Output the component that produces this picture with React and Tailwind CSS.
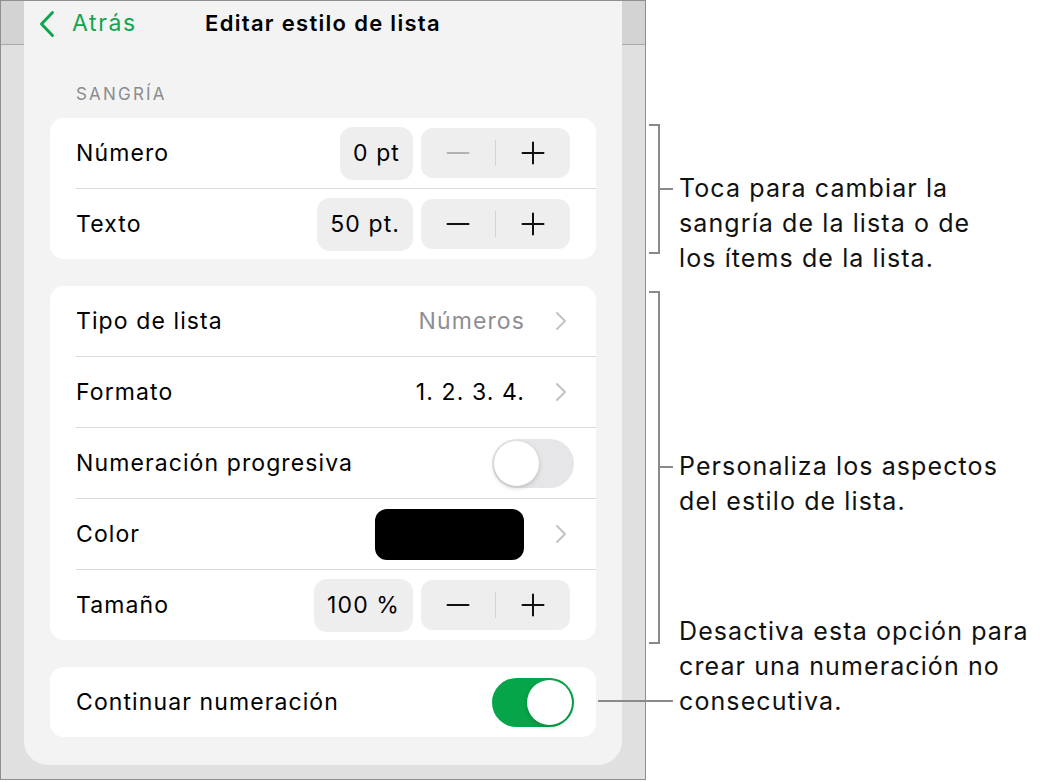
import React from "react";

const FONT = { fontFamily: "Inter, 'Noto Sans', sans-serif" };

function Chevron() {
  return (
    <svg width="13" height="20" viewBox="0 0 13 20" fill="none">
      <path d="M3 2l8 8-8 8" stroke="#c3c3c6" strokeWidth="2" strokeLinecap="round" strokeLinejoin="round" />
    </svg>
  );
}

function BackChevron() {
  return (
    <svg width="18" height="28" viewBox="0 0 18 28" fill="none">
      <path d="M14.5 2.5L3.5 14l11 11.5" stroke="#10a550" strokeWidth="3" strokeLinecap="round" strokeLinejoin="round" />
    </svg>
  );
}

function Stepper({ value, minusDisabled }) {
  return (
    <div className="flex items-center gap-[8px]">
      <div className="h-[53px] px-[13px] rounded-[13px] bg-[#eeeeef] flex items-center text-[23px] tracking-[1.1px] text-black">
        {value}
      </div>
      <div className="h-[50px] w-[149px] rounded-[12px] bg-[#eeeeef] flex items-center">
        <div className="flex-1 flex items-center justify-center">
          <svg width="24" height="24" viewBox="0 0 24 24">
            <path d="M1.5 12h21" stroke={minusDisabled ? "#b3b3b5" : "#111"} strokeWidth="2" strokeLinecap="round" />
          </svg>
        </div>
        <div className="w-[1px] h-[26px] bg-[#d4d4d6]" />
        <div className="flex-1 flex items-center justify-center">
          <svg width="24" height="24" viewBox="0 0 24 24">
            <path d="M1.5 12h21M12 1.5v21" stroke="#111" strokeWidth="2" strokeLinecap="round" />
          </svg>
        </div>
      </div>
    </div>
  );
}

function Toggle({ on }) {
  return (
    <div
      className={
        "w-[82px] h-[49px] rounded-full p-[2px] flex items-center " +
        (on ? "bg-[#07a54a] justify-end" : "bg-[#e6e6e9] justify-start")
      }
    >
      <div className="w-[45px] h-[45px] rounded-full bg-white shadow-[0_2px_5px_rgba(0,0,0,0.18)]" />
    </div>
  );
}

function Row({ label, children, right = "pr-[26px]" }) {
  return (
    <div className="h-[70px] pl-[26px] flex items-center">
      <div className={"flex-1 h-full flex items-center justify-between " + right}>
        <span className="text-[23px] tracking-[1.1px] text-black">{label}</span>
        <div className="flex items-center">{children}</div>
      </div>
    </div>
  );
}

function Sep() {
  return <div className="ml-[26px] h-[1px] bg-[#dadadc]" />;
}

function Card({ children }) {
  return <div className="bg-white rounded-[14px] overflow-hidden">{children}</div>;
}

function Panel() {
  return (
    <div className="w-[598px] h-[764px] bg-[#f3f3f3] rounded-b-[24px] flex flex-col">
      {/* navigation bar */}
      <div className="relative h-[45px] flex items-center">
        <div className="flex items-center pl-[14px] gap-[16px] text-[#10a550] text-[23px] tracking-[1.6px]">
          <BackChevron />
          <span>Atrás</span>
        </div>
        <div className="absolute inset-0 flex items-center justify-center pointer-events-none">
          <span className="text-[22px] font-semibold tracking-[1.3px] text-black">Editar estilo de lista</span>
        </div>
      </div>

      <div className="px-[26px] flex flex-col">
        <div className="mt-[37px] h-[22px] pl-[26px] text-[17px] leading-[22px] text-[#8b8b8f] tracking-[2.2px]">
          SANGRÍA
        </div>
        <div className="mt-[13px]">
          <Card>
            <Row label="Número">
              <Stepper value="0 pt" minusDisabled />
            </Row>
            <Sep />
            <Row label="Texto">
              <Stepper value="50 pt." />
            </Row>
          </Card>
        </div>

        <div className="mt-[27px]">
          <Card>
            <Row label="Tipo de lista" right="pr-[29px]">
              <span className="text-[23px] tracking-[1.1px] text-[#8e8e93] mr-[29px]">Números</span>
              <Chevron />
            </Row>
            <Sep />
            <Row label="Formato" right="pr-[29px]">
              <span className="text-[23px] tracking-[1.1px] text-black mr-[29px]">1. 2. 3. 4.</span>
              <Chevron />
            </Row>
            <Sep />
            <Row label="Numeración progresiva" right="pr-[22px]">
              <Toggle on={false} />
            </Row>
            <Sep />
            <Row label="Color" right="pr-[29px]">
              <div className="w-[149px] h-[51px] rounded-[12px] bg-black mr-[30px]" />
              <Chevron />
            </Row>
            <Sep />
            <Row label="Tamaño">
              <Stepper value="100 %" />
            </Row>
          </Card>
        </div>

        <div className="mt-[27px]">
          <Card>
            <Row label="Continuar numeración" right="pr-[22px]">
              <Toggle on />
            </Row>
          </Card>
        </div>
      </div>
    </div>
  );
}

function Strip() {
  return (
    <div className="w-[23px] flex flex-col">
      <div className="h-[44px] bg-[#d3d3d3] border-b border-[#a9a9a9]" />
      <div className="flex-1 bg-[#e0e0e0]" />
    </div>
  );
}

function Callout({ top, children }) {
  return (
    <div className="absolute left-[660px] flex items-start" style={{ top }}>
      <div className="w-[13px] h-[2px] bg-[#8a8a8a] mt-[17px]" />
      <div className="ml-[6px] text-[25px] leading-[35px] tracking-[1.1px] text-[#111]">{children}</div>
    </div>
  );
}

export default function App() {
  return (
    <div className="relative w-[1048px] h-[782px] bg-white overflow-hidden" style={FONT}>
      <div className="w-[646px] h-[780px] border border-[#8f8f8f] flex overflow-hidden">
        <Strip />
        <div className="flex flex-col bg-[#e0e0e0]">
          <Panel />
        </div>
        <Strip />
      </div>

      {/* annotation brackets */}
      <div className="absolute left-[649px] top-[124px] w-[11px] h-[130px] border-t-2 border-b-2 border-r-2 border-[#8a8a8a]" />
      <div className="absolute left-[649px] top-[291px] w-[11px] h-[353px] border-t-2 border-b-2 border-r-2 border-[#8a8a8a]" />
      <div className="absolute left-[598px] top-[700px] w-[75px] h-[2px] bg-[#8a8a8a]" />

      <Callout top={171}>
        <div>Toca para cambiar la</div>
        <div>sangría de la lista o de</div>
        <div>los ítems de la lista.</div>
      </Callout>
      <Callout top={449}>
        <div>Personaliza los aspectos</div>
        <div>del estilo de lista.</div>
      </Callout>
      <div className="absolute left-[679px] top-[614px] text-[25px] leading-[35px] tracking-[1.1px] text-[#111]">
        <div>Desactiva esta opción para</div>
        <div>crear una numeración no</div>
        <div>consecutiva.</div>
      </div>
    </div>
  );
}
